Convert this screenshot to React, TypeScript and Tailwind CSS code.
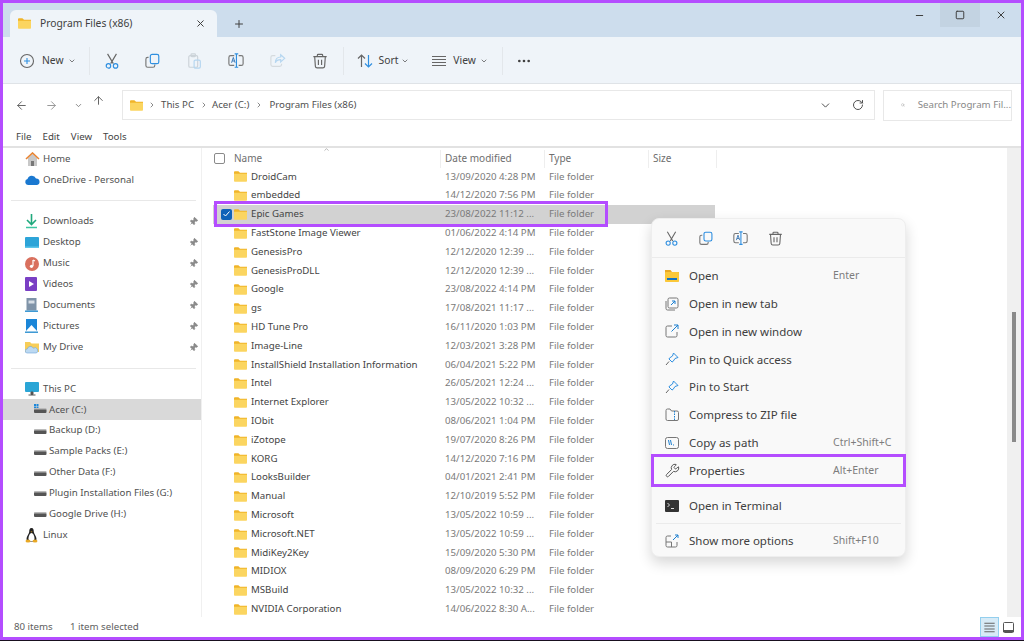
import React from "react";
import { X, Plus, ChevronDown, ChevronRight, ArrowLeft, ArrowRight, ArrowUp, RotateCw, Search, Minus, Square, MoreHorizontal, Pin, Wrench } from "lucide-react";

const Folder = ({ className = "w-[13px] h-[11px]" }: { className?: string }) => (
  <svg viewBox="0 0 16 13" className={className}>
    <path d="M0 1.500C0 .7.6 0 1.400 0h4l2 2H16v2H0z" fill="#f0b429" />
    <path d="M0 3h16v8.600c0 .8-.6 1.400-1.400 1.400H1.400C.6 13 0 12.400 0 11.600z" fill="#fbd560" />
  </svg>
);

const Cut = ({ s = 16 }: { s?: number }) => (
  <svg width={s} height={s} viewBox="0 0 18 18" fill="none" strokeWidth="1.3">
    <path d="M4 1l6.500 11M14 1L7.500 12" stroke="#666" />
    <circle cx="5" cy="14.500" r="2.500" stroke="#2f8fe0" />
    <circle cx="13" cy="14.500" r="2.500" stroke="#2f8fe0" />
  </svg>
);
const CopyI = ({ s = 16 }: { s?: number }) => (
  <svg width={s} height={s} viewBox="0 0 18 18" fill="none" strokeWidth="1.3">
    <path d="M4 5H3a2 2 0 00-2 2v7a2 2 0 002 2h6a2 2 0 002-2v-1" stroke="#777" />
    <rect x="6" y="1.500" width="9.500" height="10.500" rx="2" stroke="#2f8fe0" />
  </svg>
);
const Paste = ({ s = 16 }: { s?: number }) => (
  <svg width={s} height={s} viewBox="0 0 18 18" fill="none" strokeWidth="1.3">
    <rect x="2" y="3" width="10" height="13" rx="1.500" stroke="#ccd3d9" />
    <rect x="4.500" y="1" width="5" height="3" rx="1" stroke="#ccd3d9" />
    <rect x="8" y="8" width="7" height="9" rx="1.500" stroke="#b5d6f0" />
  </svg>
);
const Rename = ({ s = 16 }: { s?: number }) => (
  <svg width={s} height={s} viewBox="0 0 18 18" fill="none" strokeWidth="1.3">
    <path d="M7 3H3a2 2 0 00-2 2v7a2 2 0 002 2h4M12 3h3a2 2 0 012 2v7a2 2 0 01-2 2h-3" stroke="#777" />
    <path d="M9.500 1v15M7.500 1h4M7.500 16h4" stroke="#2f8fe0" />
    <path d="M4 11l2-6 2 6M4.800 9h2.600" stroke="#2f6fb0" strokeWidth="1" />
  </svg>
);
const Share = ({ s = 16 }: { s?: number }) => (
  <svg width={s} height={s} viewBox="0 0 18 18" fill="none" strokeWidth="1.3">
    <path d="M6 3H3a2 2 0 00-2 2v8a2 2 0 002 2h8a2 2 0 002-2v-1" stroke="#d5dade" />
    <path d="M12 2l4.500 4L12 10V7.500c-3 0-5 1-6 3.500 0-4 2-6.500 6-6.500z" stroke="#b5d6f0" />
  </svg>
);
const Trash = ({ s = 16 }: { s?: number }) => (
  <svg width={s} height={s} viewBox="0 0 18 18" fill="none" strokeWidth="1.3" stroke="#666">
    <path d="M1.500 4h15M6 4V2.500A1 1 0 017 1.500h4a1 1 0 011 1V4M3 4l.8 11a2 2 0 002 1.800h6.400a2 2 0 002-1.800L15 4M7.200 7.500v6M10.800 7.500v6" />
  </svg>
);
const SortI = () => (
  <svg width="16" height="16" viewBox="0 0 16 16" fill="none" strokeWidth="1.200">
    <path d="M4.500 14V2M1 5.500L4.500 2 8 5.500" stroke="#666" />
    <path d="M11.500 2v12M8 10.500l3.500 3.500 3.500-3.500" stroke="#2f8fe0" />
  </svg>
);
const Lines = ({ s = 16, w = 14 }: { s?: number; w?: number }) => (
  <svg width={s} height={s} viewBox="0 0 16 16" fill="none" stroke="#666" strokeWidth="1.100">
    <path d={`M${8 - w / 2} 3.500h${w}M${8 - w / 2} 6.500h${w}M${8 - w / 2} 9.500h${w}M${8 - w / 2} 12.500h${w}`} />
  </svg>
);

const files: [string, string][] = [
  ["DroidCam", "13/09/2020 4:28 PM"],
  ["embedded", "14/12/2020 7:56 PM"],
  ["Epic Games", "23/08/2022 11:12 ..."],
  ["FastStone Image Viewer", "01/06/2022 4:14 PM"],
  ["GenesisPro", "12/12/2020 12:39 ..."],
  ["GenesisProDLL", "12/12/2020 12:39 ..."],
  ["Google", "23/08/2022 4:14 PM"],
  ["gs", "17/08/2021 11:17 ..."],
  ["HD Tune Pro", "16/11/2020 1:03 PM"],
  ["Image-Line", "12/03/2021 3:28 PM"],
  ["InstallShield Installation Information", "06/04/2021 5:22 PM"],
  ["Intel", "26/05/2021 12:24 ..."],
  ["Internet Explorer", "13/05/2022 10:32 ..."],
  ["IObit", "08/06/2021 1:04 PM"],
  ["iZotope", "19/07/2020 8:26 PM"],
  ["KORG", "14/12/2020 7:16 PM"],
  ["LooksBuilder", "04/01/2021 2:41 PM"],
  ["Manual", "12/10/2019 5:52 PM"],
  ["Microsoft", "13/05/2022 10:59 ..."],
  ["Microsoft.NET", "13/05/2022 10:59 ..."],
  ["MidiKey2Key", "15/09/2020 5:30 PM"],
  ["MIDIOX", "08/09/2020 6:29 PM"],
  ["MSBuild", "13/05/2022 10:32 ..."],
  ["NVIDIA Corporation", "14/06/2022 8:30 A..."],
];

const Drive = ({ win }: { win?: boolean }) => (
  <svg width="14" height="12" viewBox="0 0 14 12">
    {win && <path d="M1 0h2v2H1zM3.500 0h2v2h-2zM1 2.500h2v2H1zM3.500 2.500h2v2h-2z" fill="#1c86d8" />}
    <rect x="1" y="5" width="12.500" height="4" rx="1" fill="#555" />
    <rect x="1" y="4" width="12.500" height="1.400" rx=".7" fill="#bbb" />
  </svg>
);
const pinned: [string, React.ReactNode][] = [
  ["Downloads", <svg width="13" height="15" viewBox="0 0 13 15"><path d="M6.500 0v10M2 6l4.500 4.500L11 6" fill="none" stroke="#1fa87c" strokeWidth="1.600" /><path d="M1 13.500h11" stroke="#3cc7a0" strokeWidth="1.500" /></svg>],
  ["Desktop", <svg width="14" height="12" viewBox="0 0 14 12"><rect width="14" height="11" rx="1" fill="#2da4d8" /><rect y="9.500" width="14" height="1.500" fill="#5fc6ea" /></svg>],
  ["Music", <svg width="14" height="14" viewBox="0 0 14 14"><circle cx="7" cy="7" r="7" fill="#d9705e" /><path d="M8 3v6" stroke="#fff" strokeWidth="1.200" /><path d="M8 3l2 1" stroke="#fff" strokeWidth="1.200" /><circle cx="6.500" cy="9.300" r="1.600" fill="#fff" /></svg>],
  ["Videos", <svg width="12" height="14" viewBox="0 0 12 14"><rect width="12" height="14" rx="1" fill="#7a3fc4" /><path d="M4 4l5 3-5 3z" fill="#fff" /></svg>],
  ["Documents", <svg width="13" height="14" viewBox="0 0 13 14"><rect x="1.500" width="10" height="12.500" fill="#7f93a8" /><rect x="3.500" y="2.500" width="6" height="3" fill="#d6dee6" /><path d="M0 13.200h13" stroke="#2a8fd0" strokeWidth="1.400" /></svg>],
  ["Pictures", <svg width="13" height="14" viewBox="0 0 13 14"><rect x="1" width="11" height="12" fill="#1b86d8" /><path d="M1 12l5.500-6 5.500 6z" fill="#fff" /><path d="M0 13.200h13" stroke="#2a8fd0" strokeWidth="1.400" /></svg>],
  ["My Drive", <svg width="14" height="13" viewBox="0 0 14 13"><path d="M0 1h5l1.500 1.500H14V11H0z" fill="#f7cd58" /><path d="M2 12a2 2 0 01.3-4 3.200 3.200 0 016-.8A2.400 2.400 0 0111.500 12z" fill="#bcd9f2" stroke="#6ea6d8" strokeWidth=".6" /></svg>],
];

const SideRow = ({ icon, label, pin, indent, active }: { icon: React.ReactNode; label: string; pin?: boolean; indent?: boolean; active?: boolean }) => (
  <div className={`h-[20.9px] flex items-center shrink-0 ${active ? "bg-[#d9d9d9]" : ""} ${indent ? "pl-[28px]" : "pl-[19px]"}`}>
    <span className={`${indent ? "w-[18px] pl-[2px]" : "w-[21px] pl-[3px]"} flex items-center justify-start shrink-0`}>{icon}</span>
    <span className="text-[#505050] flex-1 whitespace-nowrap">{label}</span>
    {pin && <Pin size={9} fill="#8a8a8a" stroke="#8a8a8a" className="mr-[3px] rotate-45" />}
  </div>
);

const MenuRow = ({ icon, label, kbd }: { icon: React.ReactNode; label: string; kbd?: string }) => (
  <div className="h-[27.8px] flex items-center pl-[13px] shrink-0">
    <span className="w-[24px] flex shrink-0">{icon}</span>
    <span className="flex-1 text-[#404040] whitespace-nowrap">{label}</span>
    {kbd && <span className="w-[72px] text-[#7d7d7d] text-[10.5px] whitespace-nowrap">{kbd}</span>}
  </div>
);

const HeadCell = ({ w, children }: { w: string; children?: React.ReactNode }) => (
  <span className={`${w} pl-[4px] border-l border-[#eeeeee] h-full flex items-center`}>{children}</span>
);

export default function App() {
  return (
    <div className="w-[1024px] h-[641px] overflow-hidden relative bg-[#19101f] font-['Noto_Sans',sans-serif] text-[9.7px]">
      <div className="h-[640px] border-[3px] border-[#b44dff] bg-white flex flex-col overflow-hidden">
        {/* tab strip */}
        <div className="h-[34px] shrink-0 bg-[#cddded] flex pl-[7px] text-[#404040]">
          <div className="self-end w-[207px] h-[27px] bg-[#eff4f9] rounded-t-[6px] flex items-center pl-[8px] pr-[11px]">
            <Folder className="w-[13px] h-[11px]" />
            <span className="ml-[9px] flex-1 text-[10.3px]">Program Files (x86)</span>
            <X size={11} strokeWidth={1} absoluteStrokeWidth />
          </div>
          <div className="self-end h-[27px] flex items-center ml-[16px]">
            <Plus size={12} strokeWidth={1} absoluteStrokeWidth />
          </div>
          <div className="ml-auto self-start flex">
            <div className="w-[40px] h-[24px] flex items-center justify-center pr-[1px]"><Minus size={11} strokeWidth={1} absoluteStrokeWidth /></div>
            <div className="w-[40px] h-[24px] flex items-center justify-center bg-[#c3d3e2] pr-[1px]"><Square size={10} strokeWidth={1} absoluteStrokeWidth /></div>
            <div className="w-[41px] h-[24px] flex items-center justify-center"><X size={12} strokeWidth={1} absoluteStrokeWidth /></div>
          </div>
        </div>
        {/* toolbar */}
        <div className="h-[47px] shrink-0 bg-[#eff4f9] border-b border-[#dfe3e7] flex items-center text-[#404040] text-[10.3px] pl-[16px] pt-[2px]">
          <svg width="16" height="16" viewBox="0 0 16 16" fill="none" strokeWidth="1.100" stroke="#666"><circle cx="8" cy="8" r="6.500" /><path d="M8 5v6M5 8h6" stroke="#2f8fe0" /></svg>
          <span className="ml-[7px]">New</span>
          <ChevronDown size={8} className="ml-[4px]" />
          <div className="w-px h-[28px] bg-[#e3e7eb] ml-[13px] mr-[14px]" />
          <div className="flex items-center gap-[25.6px]">
            <Cut /><CopyI /><Paste /><Rename /><Share /><Trash />
          </div>
          <div className="w-px h-[28px] bg-[#e3e7eb] ml-[15px] mr-[13px]" />
          <SortI />
          <span className="ml-[6px]">Sort</span>
          <ChevronDown size={8} className="ml-[3px]" />
          <div className="ml-[22px]"><Lines /></div>
          <span className="ml-[6px]">View</span>
          <ChevronDown size={8} className="ml-[4px]" />
          <div className="w-px h-[28px] bg-[#e3e7eb] ml-[14px] mr-[13px]" />
          <MoreHorizontal size={16} strokeWidth={2} />
        </div>
        {/* address */}
        <div className="h-[46px] shrink-0 flex items-center text-[#505050] pb-[4px]">
          <ArrowLeft size={13} strokeWidth={1} absoluteStrokeWidth className="ml-[12px] text-[#666]" />
          <ArrowRight size={13} strokeWidth={1} absoluteStrokeWidth className="ml-[17px] text-[#999]" />
          <ChevronDown size={9} className="ml-[16px] text-[#666]" />
          <ArrowUp size={13} strokeWidth={1} absoluteStrokeWidth className="ml-[9px] -mt-[10px] text-[#666]" />
          <div className="ml-[17px] w-[753px] h-[30px] border border-[#e8e8e8] flex items-center pl-[7px]">
            <Folder className="w-[13px] h-[11px]" />
            <ChevronRight size={8} className="ml-[5px]" />
            <span className="ml-[5px]">This PC</span>
            <ChevronRight size={8} className="ml-[6px]" />
            <span className="ml-[4px]">Acer (C:)</span>
            <ChevronRight size={8} className="ml-[6px]" />
            <span className="ml-[6px]">Program Files (x86)</span>
            <ChevronDown size={13} strokeWidth={1} absoluteStrokeWidth className="ml-auto mr-[20px]" />
            <RotateCw size={12} strokeWidth={1} absoluteStrokeWidth className="mr-[10px]" />
          </div>
          <div className="ml-[8px] w-[129px] h-[31px] border border-[#e8e8e8] flex items-center pl-[12px]">
            <Search size={10} strokeWidth={1} absoluteStrokeWidth className="text-[#999] ml-[5px]" />
            <span className="ml-[13px] text-[#888] whitespace-nowrap">Search Program Fil...</span>
          </div>
        </div>
        {/* menu bar */}
        <div className="h-[18px] shrink-0 flex items-center pl-[13px] gap-[11px] text-[#444] border-b-2 border-[#e2e2e2] pb-[1px]">
          <span>File</span><span>Edit</span><span>View</span><span>Tools</span>
        </div>
        {/* body */}
        <div className="flex-1 flex min-h-0">
          <aside className="w-[199px] shrink-0 border-r border-[#f0f0f0] pt-[0.5px] flex flex-col">
            <SideRow icon={<svg width="15" height="14" viewBox="0 0 15 14"><path d="M3 6v8h9V6L7.500 2z" fill="#c8c8c8" /><rect x="6" y="9" width="3" height="5" fill="#777" /><path d="M1 7l6.500-6L14 7" fill="none" stroke="#e88432" strokeWidth="1.600" /></svg>} label="Home" />
            <SideRow icon={<svg width="15" height="10" viewBox="0 0 15 10"><path d="M3 10a3 3 0 01-.5-5.900A4.500 4.500 0 0111 3.500 3.300 3.300 0 0112 10z" fill="#1a78d0" /></svg>} label="OneDrive - Personal" />
            <div className="h-[21px] flex items-center pl-[8px] pr-[5px] shrink-0"><div className="h-px bg-[#e8e8e8] w-full" /></div>
            {pinned.map(([l, i]) => <SideRow key={l} icon={i} label={l} pin />)}
            <div className="h-[21px] flex items-center pl-[8px] pr-[5px] shrink-0"><div className="h-px bg-[#e8e8e8] w-full" /></div>
            <SideRow icon={<svg width="14" height="14" viewBox="0 0 14 14"><rect width="14" height="10" rx="1" fill="#2aa5d6" /><path d="M6 10h2v2.500H6zM3.500 13h7" stroke="#555" fill="#555" /></svg>} label="This PC" />
            <SideRow indent active icon={<Drive win />} label="Acer (C:)" />
            <SideRow indent icon={<Drive />} label="Backup (D:)" />
            <SideRow indent icon={<Drive />} label="Sample Packs (E:)" />
            <SideRow indent icon={<Drive />} label="Other Data (F:)" />
            <SideRow indent icon={<Drive />} label="Plugin Installation Files (G:)" />
            <SideRow indent icon={<Drive />} label="Google Drive (H:)" />
            <SideRow icon={<svg width="13" height="15" viewBox="0 0 13 15"><path d="M6.500 0C4.500 0 4.300 2 4.200 4 4 6 1.500 8 1.500 11c0 2 2 3 5 3s5-1 5-3c0-3-2.500-5-2.700-7C8.700 2 8.500 0 6.500 0z" fill="#222" /><path d="M6.500 5C5 5 3.500 8 3.500 10.500s1.500 3 3 3 3-.5 3-3S8 5 6.500 5z" fill="#fff" /><ellipse cx="3" cy="13" rx="2.500" ry="1.500" fill="#e8a825" /><ellipse cx="10" cy="13" rx="2.500" ry="1.500" fill="#e8a825" /><path d="M5.500 3.500h2l-1 1z" fill="#e8a825" /></svg>} label="Linux" />
          </aside>
          {/* list */}
          <main className="flex-1 min-w-0 relative pl-[11px] flex flex-col">
            <div className="h-[19.5px] shrink-0 flex items-center text-[#6e6e6e] text-[10px] relative pt-[2px]">
              <span className="w-[11px] h-[11px] rounded-[2px] border border-[#8a8a8a] ml-[1px] mr-[9px]" />
              <span className="w-[206px]">Name</span>
              <HeadCell w="w-[104px]">Date modified</HeadCell>
              <HeadCell w="w-[104px]">Type</HeadCell>
              <HeadCell w="w-[68px]">Size</HeadCell>
              <HeadCell w="w-[68px]" />
              <ChevronDown size={7} className="absolute left-[110px] -top-[2px] rotate-180 text-[#888]" />
            </div>
            {files.map(([n, d], i) => (
              <div key={n} className={`h-[18.8px] shrink-0 w-[502px] flex items-center ${i === 2 ? "bg-[#d2d2d2]" : ""}`}>
                {i === 2 ? (
                  <span className="w-[11px] h-[11px] ml-[8px] mr-[2px] rounded-[2px] bg-[#0f62b8] flex items-center justify-center">
                    <svg width="7" height="6" viewBox="0 0 7 6" fill="none" stroke="#fff" strokeWidth="1"><path d="M.5 3l2 2L6.500.5" /></svg>
                  </span>
                ) : <span className="w-[21px]" />}
                <Folder className="w-[13px] h-[11px] shrink-0" />
                <span className="w-[189px] ml-[4px] text-[#444] whitespace-nowrap">{n}</span>
                <span className="w-[104px] pl-[5px] text-[#7a7a7a] whitespace-nowrap">{d}</span>
                <span className="w-[104px] pl-[5px] text-[#7a7a7a]">File folder</span>
              </div>
            ))}
            {/* highlight over the selected row */}
            <div className="absolute left-[12px] top-[52.5px] w-[394px] h-[26px] border-[3px] border-[#b44dff]" />
            {/* scrollbar */}
            <div className="absolute right-0 top-0 bottom-0 w-[14px] bg-[#f0f0f0]">
              <div className="absolute left-[5px] top-[164px] w-[4px] h-[130px] bg-[#8a8a8a]" />
            </div>
            {/* context menu */}
            <div className="absolute left-[449px] top-[70px] w-[255px] h-[339px] bg-[#f9f9f9] rounded-[8px] shadow-[0_6px_14px_rgba(0,0,0,0.16)] border border-[#eeeeee] text-[11.5px] flex flex-col z-10">
              <div className="h-[39px] shrink-0 border-b border-[#ebebeb] flex items-center pl-[12px] gap-[19.500px]">
                <Cut s={15} /><CopyI s={15} /><Rename s={15} /><Trash s={15} />
              </div>
              <div className="h-[4px] shrink-0" />
              <MenuRow icon={<svg width="14" height="12" viewBox="0 0 14 12"><path d="M0 0h5.500l1.500 2h7v2H0z" fill="#e8a825" /><rect y="2" width="14" height="10" rx=".8" fill="#fbc83a" /><rect x="2" y="8" width="10" height="2" fill="#1273c4" /></svg>} label="Open" kbd="Enter" />
              <MenuRow icon={<svg width="14" height="14" viewBox="0 0 14 14" fill="none" stroke="#777"><rect x="3" y="1" width="10" height="10" rx="1.500" /><path d="M1 4v7.500A1.500 1.500 0 002.500 13H10" /><path d="M6 8l4-4M7 4h3v3" stroke="#1b7fd0" /></svg>} label="Open in new tab" />
              <MenuRow icon={<svg width="14" height="14" viewBox="0 0 14 14" fill="none" stroke="#777"><path d="M7 2H2.500A1.500 1.500 0 001 3.500v8A1.500 1.500 0 002.500 13h8a1.500 1.500 0 001.500-1.500V8" /><path d="M6.500 7.500L13 1M9 1h4v4" stroke="#1b7fd0" /></svg>} label="Open in new window" />
              <MenuRow icon={<svg width="14" height="14" viewBox="0 0 14 14" fill="none" stroke="#2f8fe0"><path d="M8.500 1l4.500 4.500-3 1-2 3-1 .5-3-3 .5-1 3-2z" /><path d="M4 9.500L1 13" stroke="#666" /></svg>} label="Pin to Quick access" />
              <MenuRow icon={<svg width="14" height="14" viewBox="0 0 14 14" fill="none" stroke="#2f8fe0"><path d="M8.500 1l4.500 4.500-3 1-2 3-1 .5-3-3 .5-1 3-2z" /><path d="M4 9.500L1 13" stroke="#666" /></svg>} label="Pin to Start" />
              <MenuRow icon={<svg width="14" height="13" viewBox="0 0 14 13" fill="none" stroke="#777"><path d="M1 2.500A1.500 1.500 0 012.500 1H5l1.500 2H12a1.500 1.500 0 011.500 1.500v6.500a1.500 1.500 0 01-1.500 1.500H2.500A1.500 1.500 0 011 11z" /><path d="M9.500 3v9" stroke="#1b7fd0" strokeDasharray="1.500 1" /></svg>} label="Compress to ZIP file" />
              <MenuRow icon={<svg width="14" height="12" viewBox="0 0 14 12" fill="none" stroke="#777"><rect x=".5" y=".5" width="13" height="11" rx="2" /><path d="M3.500 3l1 5M5.500 3l1 5M8 8l1-.1" stroke="#1b7fd0" /></svg>} label="Copy as path" kbd="Ctrl+Shift+C" />
              <div className="h-[33px] -mb-[3px] -mt-[2.300px] shrink-0 border-[3px] border-[#b44dff] -mx-px flex items-center pl-[11px]">
                <Wrench size={15} strokeWidth={1} absoluteStrokeWidth className="mr-[9px] text-[#555]" />
                <span className="flex-1 text-[#404040]">Properties</span>
                <span className="w-[70px] text-[#7d7d7d] text-[10.5px]">Alt+Enter</span>
              </div>
              <div className="h-[7.6px] shrink-0" />
              <MenuRow icon={<svg width="14" height="12" viewBox="0 0 14 12"><rect width="14" height="12" rx="1" fill="#333" /><path d="M2.500 3l2 2-2 2M6 8.500h3" stroke="#ddd" fill="none" /></svg>} label="Open in Terminal" />
              <div className="h-[4px] shrink-0 border-b border-[#ebebeb] mx-[4px]" />
              <div className="h-[3px] shrink-0" />
              <MenuRow icon={<svg width="14" height="14" viewBox="0 0 14 14" fill="none" stroke="#777"><path d="M6 2H2.500A1.500 1.500 0 001 3.500v8A1.500 1.500 0 002.500 13h8a1.500 1.500 0 001.500-1.500V8M1 8h5.500v5" /><path d="M8 6l5-5M10 1h3v3" stroke="#1b7fd0" /></svg>} label="Show more options" kbd="Shift+F10" />
            </div>
          </main>
        </div>
        {/* status */}
        <div className="h-[20px] shrink-0 flex items-center text-[#606060] pl-[11px] relative">
          <span className="w-[56px]">80 items</span>
          <span>1 item selected</span>
          <div className="ml-auto flex items-center mr-[3px] h-full">
            <div className="w-[19px] h-[20px] bg-[#d7ebf7] border border-[#93cfee] flex items-center justify-center"><Lines s={15} w={11} /></div>
            <div className="w-[19px] h-[20px] flex items-center justify-center"><svg width="11" height="11" viewBox="0 0 11 11" fill="none" stroke="#555"><rect x=".5" y=".5" width="10" height="10" rx="1" /><path d="M0 9h11" strokeWidth="2" /></svg></div>
          </div>
        </div>
      </div>
    </div>
  );
}
